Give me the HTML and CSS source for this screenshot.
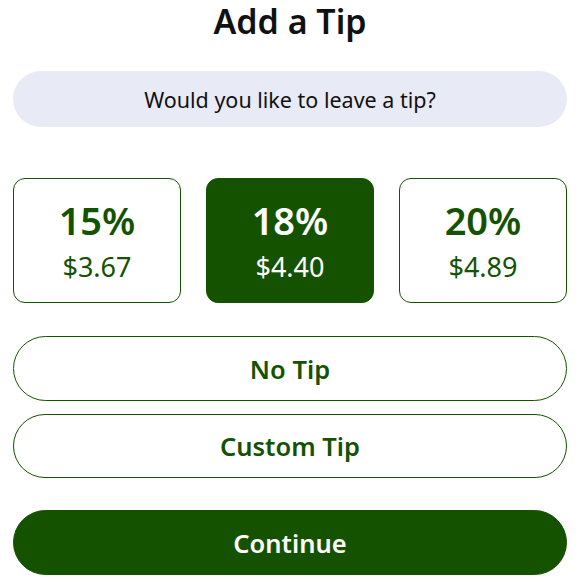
FILE: index.html
```html
<!doctype html>
<html lang="en">
<head>
  <meta charset="utf-8">
  <title>Add a Tip</title>
  <link rel="stylesheet" href="styles.css">
</head>
<body>
  <div id="tip-picker">
    <h1>Add a Tip</h1>
    <div class="question">Would you like to leave a tip?</div>

    <div class="options">
      <a href="#" class="option">
        <span class="percent">15%</span>
        <span class="amount">$3.67</span>
      </a>
      <a href="#" class="option selected">
        <span class="percent">18%</span>
        <span class="amount">$4.40</span>
      </a>
      <a href="#" class="option">
        <span class="percent">20%</span>
        <span class="amount">$4.89</span>
      </a>
    </div>

    <a href="#" class="pill-button no-tip">No Tip</a>
    <a href="#" class="pill-button custom-tip">Custom Tip</a>
    <a href="#" class="pill-button continue">Continue</a>
  </div>
</body>
</html>
```

FILE: styles.css
```css
body {
  --green: #155200;
  margin: 0;
  font-family: "Noto Sans", sans-serif;
  color: #111;
  background: #fff;
}
#tip-picker {
  padding: 0 12px 0 13px;
  display: flex;
  flex-direction: column;
}
h1 {
  margin: 0;
  padding-top: 2px;
  font-size: 34px;
  line-height: 38px;
  font-weight: 600;
  text-align: center;
}
.question {
  margin-top: 31px;
  height: 56px;
  border-radius: 28px;
  background: #e8eaf6;
  display: flex;
  align-items: center;
  justify-content: center;
  font-size: 21.5px;
}

.options {
  margin-top: 51px;
  display: grid;
  grid-template-columns: repeat(3, 1fr);
  gap: 25px;
}
.option {
  height: 125px;
  box-sizing: border-box;
  border: 1px solid var(--green);
  border-radius: 12px;
  display: flex;
  flex-direction: column;
  align-items: center;
  justify-content: center;
  gap: 9px;
  color: var(--green);
  text-decoration: none;
}
.option.selected {
  background: var(--green);
  color: #fff;
}
.percent {
  font-size: 38px;
  line-height: 44px;
  font-weight: 600;
}
.amount {
  font-size: 27px;
  line-height: 32px;
}

.pill-button {
  box-sizing: border-box;
  height: 65px;
  border: 1px solid var(--green);
  border-radius: 33px;
  display: flex;
  align-items: center;
  justify-content: center;
  font-size: 25.5px;
  font-weight: 600;
  color: var(--green);
  text-decoration: none;
}
.no-tip {
  margin-top: 33px;
}
.custom-tip {
  margin-top: 13px;
  height: 64px;
}
.continue {
  margin-top: 32px;
  background: var(--green);
  color: #fff;
  font-size: 25.5px;
}
```
